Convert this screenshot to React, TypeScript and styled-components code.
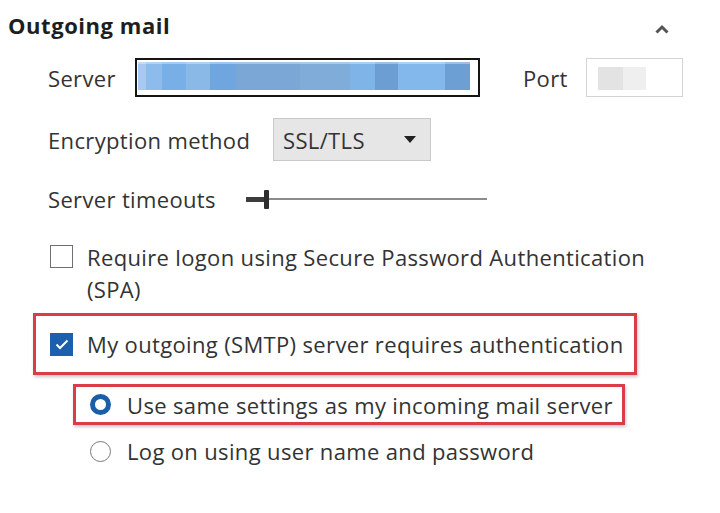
import React from "react";
import styled, { createGlobalStyle } from "styled-components";

const Global = createGlobalStyle`
  html, body { margin: 0; padding: 0; background: #ffffff; }
  body { font-family: "Open Sans", "Noto Sans", Arial, sans-serif; color: #333333; }
`;

const Page = styled.div`
  width: 720px;
  height: 513px;
  background: #fff;
  overflow: hidden;
`;

const Header = styled.div`
  height: 50px;
  display: flex;
  align-items: center;
  justify-content: space-between;
  padding: 0 50px 0 8px;
`;

const Title = styled.h2`
  margin: 0;
  font-size: 22px;
  font-weight: 700;
  color: #1e1e1e;
  letter-spacing: 0.55px;
`;

const Chevron = styled.svg`
  width: 16px;
  height: 12px;
  display: block;
  margin-top: 7px;
`;

const Body = styled.div`
  padding-left: 48px;
  display: flex;
  flex-direction: column;
  align-items: flex-start;
`;

const Row = styled.div<{ $top: number; $h: number }>`
  margin-top: ${(p) => p.$top}px;
  height: ${(p) => p.$h}px;
  display: flex;
  align-items: center;
`;

const Label = styled.span<{ $w?: number }>`
  font-size: 22px;
  letter-spacing: 0.35px;
  color: #333;
  white-space: nowrap;
  ${(p) => (p.$w ? `width: ${p.$w}px; flex: none;` : "")}
`;

const ServerInput = styled.div`
  box-sizing: border-box;
  width: 345px;
  height: 39px;
  border: 2px solid #151515;
  padding: 2px 8px 5px 1px;
  display: flex;
`;

const Redacted = styled.div`
  flex: 1;
  background: linear-gradient(
    to right,
    #a6caef 0px, #a6caef 8px,
    #8dbbeb 8px, #8dbbeb 24px,
    #79afe7 24px, #79afe7 48px,
    #8ab9e7 48px, #8ab9e7 72px,
    #70a6df 72px, #70a6df 98px,
    #7ba7d6 98px, #7ba7d6 162px,
    #80acd9 162px, #80acd9 212px,
    #7fb4e9 212px, #7fb4e9 237px,
    #6d9ed3 237px, #6d9ed3 260px,
    #82b8ec 260px, #82b8ec 307px,
    #6c9fd4 307px, #6c9fd4 332px
  );
  box-shadow: inset 0 2px 0 rgba(255, 255, 255, 0.35);
`;

const PortLabel = styled(Label)`
  margin-left: 43px;
  margin-right: 18px;
`;

const PortInput = styled.div`
  box-sizing: border-box;
  width: 97px;
  height: 39px;
  border: 1.5px solid #d4d4d4;
  padding: 8px 0 6px 11px;
  display: flex;
`;

const PortRedacted = styled.div`
  width: 48px;
  background: linear-gradient(to right, #e3e3e3 0, #e3e3e3 25px, #efefef 25px, #efefef 48px);
`;

const Select = styled.div`
  box-sizing: border-box;
  width: 158px;
  height: 43px;
  background: #e6e6e6;
  border: 1.5px solid #c9c9c9;
  display: flex;
  align-items: center;
  justify-content: space-between;
  padding: 0 14px 0 9px;
  font-size: 22px;
  letter-spacing: 0.35px;
  color: #333;
`;

const Caret = styled.svg`
  width: 12px;
  height: 7px;
  display: block;
`;

const Slider = styled.div`
  position: relative;
  width: 241px;
  height: 24px;
`;

const Track = styled.div`
  position: absolute;
  left: 0;
  right: 0;
  top: 11px;
  height: 2px;
  background: #8c8c8c;
`;

const Fill = styled.div`
  position: absolute;
  left: 0;
  width: 20px;
  top: 10px;
  height: 5px;
  background: #3d3d3d;
`;

const Thumb = styled.div`
  position: absolute;
  left: 18px;
  top: 3px;
  width: 5px;
  height: 19px;
  background: #2e2e2e;
  border-radius: 1px;
`;

const CheckRow = styled.div<{ $top: number }>`
  margin-top: ${(p) => p.$top}px;
  margin-left: 2px;
  display: flex;
  align-items: flex-start;
  gap: 14px;
`;

const CheckText = styled.span`
  font-size: 22px;
  letter-spacing: 0.35px;
  line-height: 32px;
  color: #333;
  width: 580px;
`;

const Box = styled.span<{ $checked?: boolean; $offset?: number }>`
  box-sizing: border-box;
  flex: none;
  width: 23px;
  height: 23px;
  margin-top: ${(p) => p.$offset ?? 0}px;
  border: ${(p) => (p.$checked ? "none" : "1.5px solid #707070")};
  background: ${(p) => (p.$checked ? "#1c5fae" : "#fff")};
  display: flex;
  align-items: center;
  justify-content: center;
`;

const Highlight = styled.div<{ $top: number; $left: number; $w: number; $h: number; $gap: number }>`
  box-sizing: border-box;
  margin-top: ${(p) => p.$top}px;
  margin-left: ${(p) => p.$left}px;
  width: ${(p) => p.$w}px;
  height: ${(p) => p.$h}px;
  border: 3px solid #d93d47;
  box-shadow: 1px 2px 3px rgba(0, 0, 0, 0.22);
  padding-left: 14px;
  display: flex;
  align-items: center;
  gap: ${(p) => p.$gap}px;
`;

const OptionRow = styled.div<{ $top: number; $left: number; $h: number }>`
  margin-top: ${(p) => p.$top}px;
  margin-left: ${(p) => p.$left}px;
  height: ${(p) => p.$h}px;
  display: flex;
  align-items: center;
  gap: 16px;
`;

const Radio = styled.span<{ $on?: boolean }>`
  box-sizing: border-box;
  flex: none;
  width: 21px;
  height: 21px;
  border-radius: 50%;
  border: ${(p) => (p.$on ? "5px solid #1a5ea8" : "1.5px solid #7a7a7a")};
  background: #fff;
`;

const OptionText = styled.span`
  font-size: 22px;
  letter-spacing: 0.35px;
  color: #333;
  white-space: nowrap;
`;

export default function App() {
  return (
    <Page>
      <Global />
      <Header>
        <Title>Outgoing mail</Title>
        <Chevron viewBox="0 0 16 12">
          <path d="M2.5 9.5 L8 4 L13.5 9.5" fill="none" stroke="#555" strokeWidth="3" />
        </Chevron>
      </Header>
      <Body>
        <Row $top={8} $h={39}>
          <Label $w={87}>Server</Label>
          <ServerInput>
            <Redacted />
          </ServerInput>
          <PortLabel>Port</PortLabel>
          <PortInput>
            <PortRedacted />
          </PortInput>
        </Row>
        <Row $top={21} $h={43}>
          <Label $w={225}>Encryption method</Label>
          <Select>
            <span>SSL/TLS</span>
            <Caret viewBox="0 0 12 7">
              <path d="M0 0 H12 L6 7 Z" fill="#222" />
            </Caret>
          </Select>
        </Row>
        <Row $top={23} $h={30}>
          <Label $w={198}>Server timeouts</Label>
          <Slider>
            <Track />
            <Fill />
            <Thumb />
          </Slider>
        </Row>
        <CheckRow $top={27}>
          <Box $offset={4} />
          <CheckText>Require logon using Secure Password Authentication (SPA)</CheckText>
        </CheckRow>
      </Body>
      <Highlight $top={8} $left={33} $w={604} $h={62} $gap={14}>
        <Box $checked>
          <svg width="14" height="11" viewBox="0 0 14 11">
            <path d="M1.5 5.5 L5 9 L12.5 1.5" fill="none" stroke="#fff" strokeWidth="2" />
          </svg>
        </Box>
        <OptionText>My outgoing (SMTP) server requires authentication</OptionText>
      </Highlight>
      <Highlight $top={9} $left={73} $w={552} $h={41} $gap={16}>
        <Radio $on />
        <OptionText>Use same settings as my incoming mail server</OptionText>
      </Highlight>
      <OptionRow $top={10} $left={90} $h={32}>
        <Radio />
        <OptionText>Log on using user name and password</OptionText>
      </OptionRow>
    </Page>
  );
}
